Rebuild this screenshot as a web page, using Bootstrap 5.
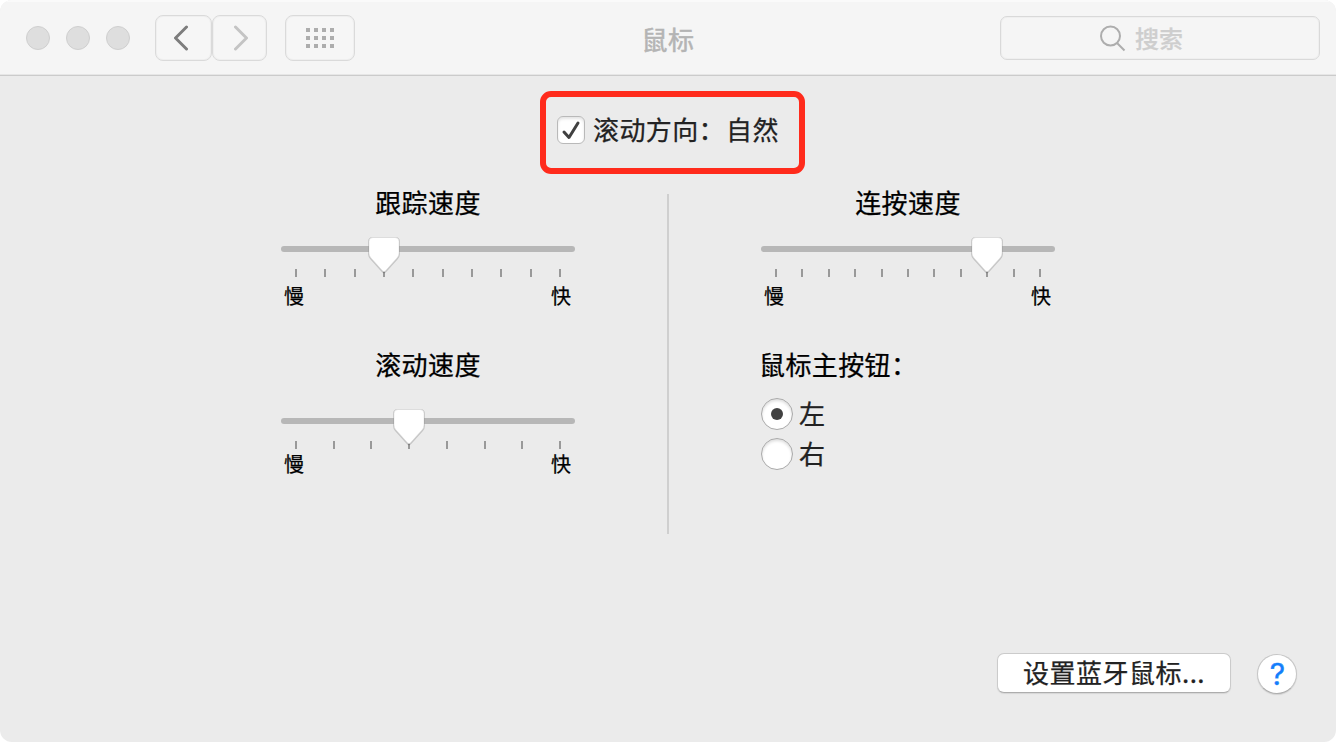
<!DOCTYPE html>
<html lang="zh-CN">
<head>
<meta charset="utf-8">
<meta name="viewport" content="width=device-width, initial-scale=1">
<title>鼠标</title>
<link href="https://cdn.jsdelivr.net/npm/bootstrap@5.3.0/dist/css/bootstrap.min.css" rel="stylesheet">
<style>
body{background:#fff;font-family:"Noto Sans CJK SC",sans-serif;font-size:26px;letter-spacing:.4px;line-height:32px;color:#000;overflow:hidden;-webkit-text-stroke:.25px currentColor}
.pane{width:1336px;height:742px;background:#ebebeb;border-radius:12px;overflow:hidden}
.bar{height:76px;background:#f5f5f5;border-bottom:1px solid #cbcbcb;box-shadow:inset 0 2px #fafafa,inset 0 -1px #e6e6e6;padding:0 16px 0 26px;display:grid;grid-template-columns:1fr auto 1fr}
.light{width:24px;height:24px;border-radius:50%;background:#dedede;border:1px solid #cfcfcf}
.tool{height:46px;border:1px solid #dadada;box-shadow:inset 0 0 0 1px #efefef;border-radius:8px;background:#f6f6f6;padding:0}
.find{width:320px;height:44px;border:1px solid #d9d9d9;box-shadow:inset 0 0 0 1px #efefef;border-radius:7px;color:#cecece;font-size:24px;letter-spacing:0;font-weight:500}
.heading{color:#b4b4b4;-webkit-text-stroke-width:.5px}
.hilite{width:265px;height:83px;border:6px solid #ff2b1c;border-radius:11px;margin:15px 0 0 9px;padding:0 0 5px 11px;color:#222}
.check{width:28px;height:28px;border:1px solid #b9b9b9;border-radius:6px;background:#fff;box-shadow:inset 0 2px 3px #e4e4e4}
.settings{margin-top:20px;height:340px;display:grid;grid-template-columns:294px 2px 294px;column-gap:92px;padding-left:281px}
.rule{background:#cfcfcf}
.control{width:294px;margin-top:-8px}
.ends{font-size:20px;letter-spacing:0;line-height:24px;padding:0 4px 0 3px}
.pick{width:32px;height:32px;border-radius:50%;border:1px solid #a9a9a9;background:#fff;box-shadow:inset 0 2px 3px #ddd}
.pick.on::after{content:"";width:12px;height:12px;border-radius:50%;background:#414141}
.choice{height:40px;color:#222;gap:6px}
.push{width:234px;height:40px;background:#fff;border:1px solid #cbcbcb;border-bottom-color:#adadad;border-radius:7px;box-shadow:0 1px 1px #d6d6d6;padding:0 0 3px;font-size:26px;letter-spacing:.5px;line-height:32px;color:#222;-webkit-text-stroke:inherit}
.help{width:40px;height:40px;background:#fff;border:1px solid #c6c6c6;border-bottom-color:#adadad;border-radius:50%;box-shadow:0 1px 1px #d0d0d0;padding:0 0 0 1px;color:#147efb;font:30px/36px Inter,sans-serif;letter-spacing:0;-webkit-text-stroke:.4px currentColor}
svg{display:block}
</style>
</head>
<body>
<div class="pane d-flex flex-column">
  <header class="bar align-items-center">
    <div class="d-flex align-items-center">
      <div class="d-flex" style="gap:16px"><span class="light"></span><span class="light"></span><span class="light"></span></div>
      <button class="tool d-flex align-items-center justify-content-center" style="width:57px;margin-left:25px" aria-label="后退"><svg width="18" height="26" style="margin-right:5px" fill="none" stroke="#7d7d7d" stroke-width="3" stroke-linecap="round" stroke-linejoin="round"><path d="M14.500 2 3.500 13l11 11"/></svg></button>
      <button class="tool d-flex align-items-center justify-content-center" style="width:55px" aria-label="前进"><svg width="18" height="26" style="margin-left:2px" fill="none" stroke="#c4c4c4" stroke-width="3" stroke-linecap="round" stroke-linejoin="round"><path d="M3.500 2 14.500 13 3.500 24"/></svg></button>
      <button class="tool d-flex align-items-center justify-content-center" style="width:70px;margin-left:18px" aria-label="全部显示"><svg width="28" height="20" fill="#adadad"><path d="M0 0h4v4H0zM8 0h4v4H8zM16 0h4v4h-4zM24 0h4v4h-4zM0 8h4v4H0zM8 8h4v4H8zM16 8h4v4h-4zM24 8h4v4h-4zM0 16h4v4H0zM8 16h4v4H8zM16 16h4v4h-4zM24 16h4v4h-4z"/></svg></button>
    </div>
    <div class="heading" style="margin:2px 0 0 -10px">鼠标</div>
    <div class="find d-flex align-items-center ms-auto" style="padding-left:98px"><svg width="28" height="28" fill="none" stroke="#adadad" stroke-width="2"><circle cx="11.5" cy="12" r="9.5"/><path d="m18 19 7.500 7.500"/></svg><span style="margin-left:8px">搜索</span></div>
  </header>

  <main class="flex-grow-1 d-flex flex-column">
    <div class="hilite d-flex align-items-center align-self-center">
      <span class="check"><svg width="26" height="26" fill="none" stroke="#404040" stroke-width="3" stroke-linecap="round" stroke-linejoin="round"><path d="m6 15 5 5.500L20 6"/></svg></span>
      <span style="margin:-2px 0 0 8px">滚动方向：<span class="ms-0" style="padding-left:1px">自然</span></span>
    </div>
    <div class="settings">
      <section>
        <div class="control">
          <div class="text-center">跟踪速度</div>
          <svg class="slider" style="margin-top:17px" width="294" height="44" data-ticks="10" data-value="3"></svg>
          <div class="ends d-flex justify-content-between" style="margin-top:5px"><span>慢</span><span>快</span></div>
        </div>
        <div class="control" style="margin-top:40px">
          <div class="text-center">滚动速度</div>
          <svg class="slider" style="margin-top:27px" width="294" height="44" data-ticks="8" data-value="3"></svg>
          <div class="ends d-flex justify-content-between" style="margin-top:1px"><span>慢</span><span>快</span></div>
        </div>
      </section>
      <div class="rule"></div>
      <section>
        <div class="control">
          <div class="text-center">连按速度</div>
          <svg class="slider" style="margin-top:17px" width="294" height="44" data-ticks="11" data-value="8"></svg>
          <div class="ends d-flex justify-content-between" style="margin-top:5px"><span>慢</span><span>快</span></div>
        </div>
        <div style="margin:40px 0 0 -2px">鼠标主按钮：</div>
        <div style="margin-top:14px">
          <div class="choice d-flex align-items-center"><span class="pick on d-flex align-items-center justify-content-center"></span><span style="margin-top:-2px">左</span></div>
          <div class="choice d-flex align-items-center"><span class="pick"></span><span style="margin-top:-2px">右</span></div>
        </div>
      </section>
    </div>
    <div class="d-flex justify-content-end mt-auto" style="gap:26px;padding:0 39px 48px 0">
      <button class="push">设置蓝牙鼠标...</button>
      <button class="help" style="margin-top:1px">?</button>
    </div>
  </main>
</div>
<script src="https://cdn.jsdelivr.net/npm/bootstrap@5.3.0/dist/js/bootstrap.bundle.min.js"></script>
<script>
document.querySelectorAll('.slider').forEach(function (s) {
  var n = +s.dataset.ticks, at = function (i) { return Math.round(15 + 264 * i / (n - 1)); };
  var out = '<rect y="11" width="294" height="6" rx="3" fill="#b7b7b7"/>';
  for (var i = 0; i < n; i++) out += '<rect x="' + (at(i) - 1) + '" y="34" width="2" height="8" fill="#999"/>';
  var shape = 'M-11 2.500H11Q15 2.500 15 6.500V18Q15 21 13 23L1.500 35.800Q0 37.500-1.500 35.800L-13 23Q-15 21-15 18V6.500Q-15 2.500-11 2.500Z';
  out += '<g transform="translate(' + at(+s.dataset.value) + ' 0)"><path d="' + shape + '" transform="translate(0 .5)" fill="none" stroke="#000" stroke-opacity=".16" stroke-width="2"/><path d="' + shape + '" fill="#fff" stroke="#d8d8d8" stroke-width=".5"/></g>';
  s.innerHTML = out;
});
</script>
</body>
</html>
